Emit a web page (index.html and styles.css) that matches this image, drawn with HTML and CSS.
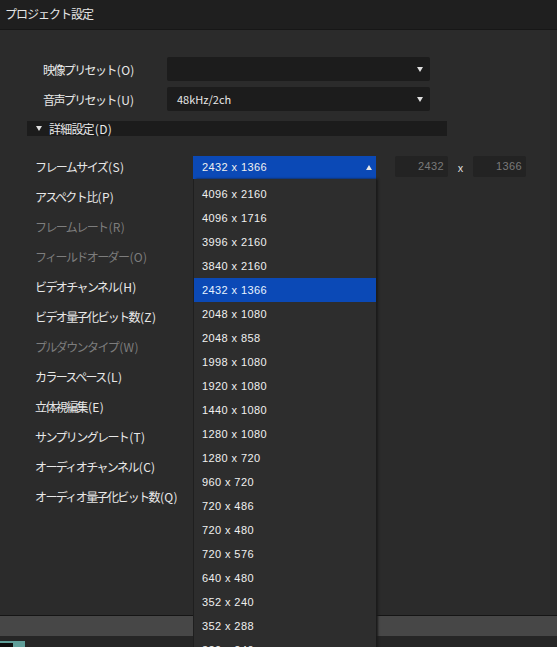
FILE: index.html
```html
<!DOCTYPE html>
<html lang="ja">
<head>
<meta charset="utf-8">
<title>プロジェクト設定</title>
<link rel="stylesheet" href="styles.css">
</head>
<body>
<div class="titlebar">プロジェクト設定</div>
<div class="main">
  <div class="presets">
    <div class="prow">
      <span class="plabel">映像プリセット<span class="key">(O)</span></span>
      <div class="select"><span class="sval"></span><span class="arrow down"></span></div>
    </div>
    <div class="prow">
      <span class="plabel">音声プリセット<span class="key">(U)</span></span>
      <div class="select"><span class="sval">48kHz/2ch</span><span class="arrow down"></span></div>
    </div>
  </div>
  <div class="details"><span class="arrow down small"></span><span>詳細設定<span class="key">(D)</span></span></div>
  <div class="form">
    <div class="frow">
      <span class="flabel">フレームサイズ<span class="key">(S)</span></span>
      <div class="combo">
        <div class="combo-head"><span class="num">2432 x 1366</span><span class="arrow up"></span></div>
        <ul class="list">
          <li class="num">4096 x 2160</li>
          <li class="num">4096 x 1716</li>
          <li class="num">3996 x 2160</li>
          <li class="num">3840 x 2160</li>
          <li class="num sel">2432 x 1366</li>
          <li class="num">2048 x 1080</li>
          <li class="num">2048 x 858</li>
          <li class="num">1998 x 1080</li>
          <li class="num">1920 x 1080</li>
          <li class="num">1440 x 1080</li>
          <li class="num">1280 x 1080</li>
          <li class="num">1280 x 720</li>
          <li class="num">960 x 720</li>
          <li class="num">720 x 486</li>
          <li class="num">720 x 480</li>
          <li class="num">720 x 576</li>
          <li class="num">640 x 480</li>
          <li class="num">352 x 240</li>
          <li class="num">352 x 288</li>
          <li class="num">320 x 240</li>
        </ul>
      </div>
      <div class="dims">
        <span class="inbox num">2432</span>
        <span class="times">x</span>
        <span class="inbox num">1366</span>
      </div>
    </div>
    <div class="frow"><span class="flabel">アスペクト比<span class="key">(P)</span></span></div>
    <div class="frow"><span class="flabel dis">フレームレート<span class="key">(R)</span></span></div>
    <div class="frow"><span class="flabel dis">フィールドオーダー<span class="key">(O)</span></span></div>
    <div class="frow"><span class="flabel">ビデオチャンネル<span class="key">(H)</span></span></div>
    <div class="frow"><span class="flabel">ビデオ量子化ビット数<span class="key">(Z)</span></span></div>
    <div class="frow"><span class="flabel dis">プルダウンタイプ<span class="key">(W)</span></span></div>
    <div class="frow"><span class="flabel">カラースペース<span class="key">(L)</span></span></div>
    <div class="frow"><span class="flabel">立体視編集<span class="key">(E)</span></span></div>
    <div class="frow"><span class="flabel">サンプリングレート<span class="key">(T)</span></span></div>
    <div class="frow"><span class="flabel">オーディオチャンネル<span class="key">(C)</span></span></div>
    <div class="frow"><span class="flabel">オーディオ量子化ビット数<span class="key">(Q)</span></span></div>
  </div>
</div>
<div class="footer">
  <div class="fbar"></div>
  <div class="fdark"><span class="tealbox"><span class="tealinner"></span></span></div>
</div>
</body>
</html>
```
FILE: styles.css
```css
* { box-sizing: border-box; }
html, body { margin: 0; padding: 0; }
body {
  width: 557px;
  height: 647px;
  overflow: hidden;
  background: #2b2b2b;
  color: #e8e8e8;
  font-family: "Noto Sans CJK JP", "Noto Sans", sans-serif;
  font-size: 12px;
  display: flex;
  flex-direction: column;
}
.titlebar {
  height: 30px;
  line-height: 28px;
  padding-left: 5px;
  background: #1f1f1f;
  border-bottom: 1px solid #171717;
  color: #e6e6e6;
  letter-spacing: -1px;
  flex: none;
}
.main {
  flex: 1;
  position: relative;
  padding-top: 27px;
}
.key { letter-spacing: 0.3px; margin-left: 1px; }
.presets { display: flex; flex-direction: column; gap: 6px; }
.prow { display: flex; align-items: center; height: 24px; padding-left: 43px; }
.plabel { width: 124px; letter-spacing: -1.6px; }
.select {
  width: 263px;
  height: 24px;
  background: #1c1c1c;
  border-radius: 2px;
  display: flex;
  align-items: center;
  justify-content: space-between;
  padding: 0 7px 0 10px;
  font-size: 11px;
}
.arrow { width: 0; height: 0; border-left: 3px solid transparent; border-right: 3px solid transparent; }
.arrow.down { border-top: 5px solid #e0e0e0; }
.arrow.up { border-bottom: 5px solid #e8e8e8; }
.details {
  margin: 10px 0 0 27px;
  width: 420px;
  height: 15px;
  background: #1c1c1c;
  display: flex;
  align-items: center;
  gap: 7px;
  padding-left: 9px;
  letter-spacing: -0.8px;
}
.form { margin-top: 15px; display: flex; flex-direction: column; }
.frow { height: 30px; display: flex; align-items: center; padding-left: 35px; }
.flabel { width: 158px; letter-spacing: -1.6px; }
.flabel.dis { color: #7d7d7d; }
.num { font-family: "Liberation Sans Narrow", "Liberation Sans", sans-serif; font-size: 11px; letter-spacing: 0.4px; }
.combo { position: relative; width: 183px; z-index: 5; margin-top: 2px; }
.combo-head {
  height: 23px;
  background: #0b49b6;
  display: flex;
  align-items: center;
  justify-content: space-between;
  padding: 0 4px 0 9px;
  color: #f0f0f0;
}
.list {
  position: absolute;
  top: 100%;
  left: 1px;
  width: 182px;
  margin: 0;
  padding: 3px 0 0;
  list-style: none;
  background: #2d2d2d;
  box-shadow: 2px 0 2px #1a1a1a, -1px 0 0 #202020;
}
.list li {
  height: 24px;
  line-height: 24px;
  padding-left: 8px;
  color: #f0f0f0;
}
.list li.sel { background: #0b49b6; color: #e8f4ff; }
.dims { display: flex; align-items: center; margin-left: 19px; margin-top: 1px; }
.inbox {
  width: 53px;
  height: 21px;
  background: #232323;
  border-radius: 2px;
  color: #7a7a7a;
  text-align: right;
  padding-right: 4px;
  line-height: 21px;
}
.times { width: 25px; text-align: center; color: #ddd; font-size: 11px; }
.footer { flex: none; height: 32px; border-top: 1px solid #151515; display: flex; flex-direction: column; }
.fbar { height: 20px; background: #474747; }
.fdark { flex: 1; background: #262626; position: relative; }
.tealbox {
  position: absolute;
  left: 0;
  top: 5px;
  width: 25px;
  height: 10px;
  background: #5f9e99;
}
.tealinner { position: absolute; left: 0; top: 2px; width: 13px; height: 8px; background: #0d0d0d; }
```
